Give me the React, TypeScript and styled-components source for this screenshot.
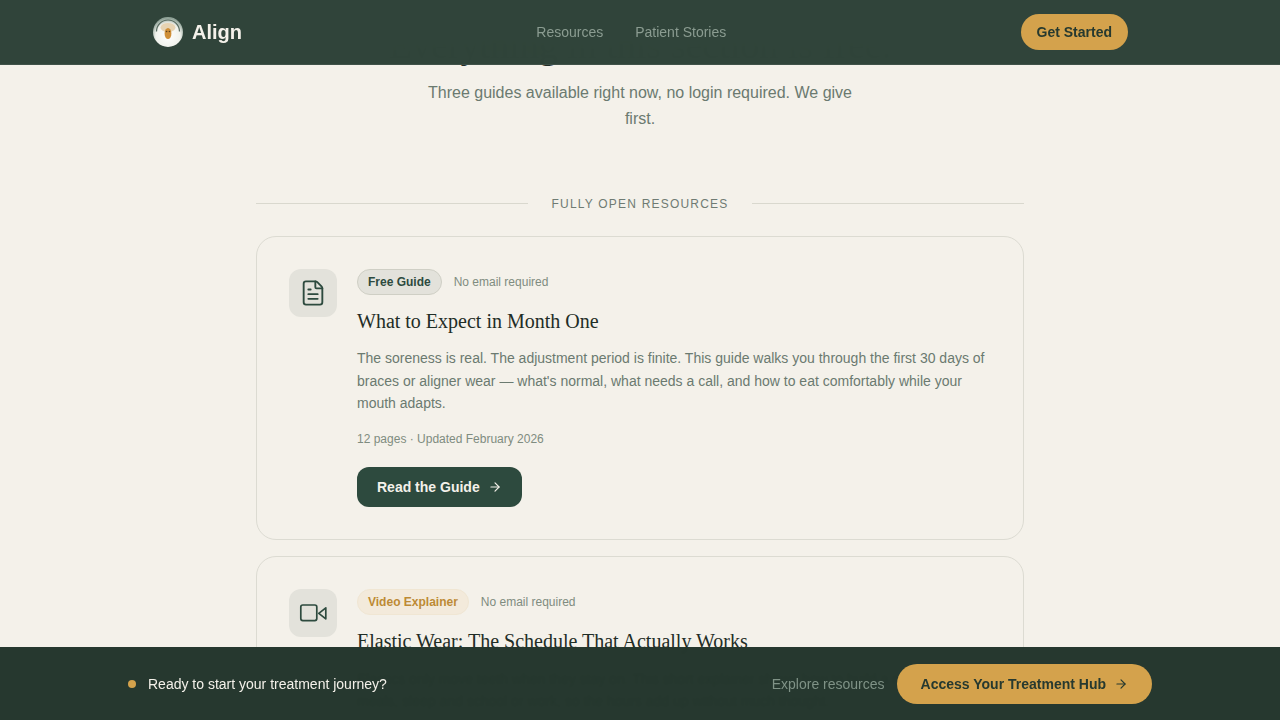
import React, { useLayoutEffect } from 'react';
import styled, { createGlobalStyle } from 'styled-components';
import { ArrowRight, FileText, Mic } from 'lucide-react';

const SANS = `'Liberation Sans', Arial, sans-serif`;
const SERIF = `'Liberation Serif', 'Times New Roman', serif`;

const GlobalStyle = createGlobalStyle`
  html, body {
    margin: 0;
    padding: 0;
    background: #f4f1ea;
    font-family: ${SANS};
    color: #1f2d26;
  }
  * { box-sizing: border-box; }
`;

const Header = styled.header`
  position: fixed;
  top: 0;
  left: 0;
  right: 0;
  height: 65px;
  z-index: 10;
  background: rgba(46, 66, 56, 0.99);
  backdrop-filter: blur(12px);
  border-bottom: 1px solid rgba(255, 255, 255, 0.08);
`;

const HeaderInner = styled.div`
  width: 976px;
  height: 64px;
  margin: 0 auto;
  display: flex;
  align-items: center;
  justify-content: space-between;
`;

const Brand = styled.a`
  display: flex;
  align-items: center;
  gap: 8px;
  font-size: 20px;
  font-weight: 700;
  color: #f4f1ea;
`;

const Nav = styled.nav`
  display: flex;
  gap: 32px;
`;

const NavLink = styled.a`
  font-size: 14px;
  color: #8b9c91;
`;

const StartButton = styled.a`
  height: 36px;
  padding: 0 16px;
  display: flex;
  align-items: center;
  border-radius: 18px;
  background: #d4a24c;
  color: #26392f;
  font-size: 14px;
  font-weight: 700;
`;

const Main = styled.main`
  width: 768px;
  margin: 0 auto;
  padding: 113px 0 120px;
`;

const Hero = styled.section`
  text-align: center;
  margin-bottom: 62px;
`;

const HeroTitle = styled.h1`
  margin: 0 0 11px;
  font-family: ${SERIF};
  font-size: 38px;
  line-height: 48px;
  font-weight: 400;
  color: #1f2d26;
`;

const HeroText = styled.p`
  width: 448px;
  margin: 0 auto;
  font-size: 16px;
  line-height: 26px;
  color: #6b7a70;
`;

const SectionLabel = styled.div`
  display: flex;
  align-items: center;
  gap: 24px;
  margin-bottom: 22px;
  font-size: 12px;
  line-height: 20px;
  letter-spacing: 1.2px;
  text-transform: uppercase;
  color: #6f7b73;

  &::before,
  &::after {
    content: '';
    flex: 1;
    height: 1px;
    margin-top: -1px;
    background: #d9d8ce;
  }
`;

const CardList = styled.div`
  display: flex;
  flex-direction: column;
  gap: 16px;
`;

const Card = styled.article`
  display: flex;
  gap: 20px;
  padding: 32px;
  border: 1px solid #dcdbd2;
  border-radius: 20px;
`;

const IconBox = styled.div`
  flex: none;
  width: 48px;
  height: 48px;
  border-radius: 12px;
  background: #e3e2db;
  color: #2d4a3e;
  display: flex;
  align-items: center;
  justify-content: center;
`;

const CardBody = styled.div`
  flex: 1;
`;

const TagRow = styled.div`
  display: flex;
  align-items: center;
  gap: 12px;
  margin-bottom: 12px;
`;

const Tag = styled.span<{ $gold?: boolean }>`
  height: 26px;
  padding: 0 10px;
  display: flex;
  align-items: center;
  border-radius: 13px;
  font-size: 12px;
  font-weight: 700;
  border: 1px solid ${props => (props.$gold ? '#f0e6d3' : '#cfcfc5')};
  background: ${props => (props.$gold ? '#f3eadb' : '#e3e2db')};
  color: ${props => (props.$gold ? '#bd8a35' : '#2d4a3e')};
`;

const TagNote = styled.span`
  font-size: 12px;
  color: #7f8c80;
`;

const CardTitle = styled.h2`
  margin: 0 0 12.3px;
  font-family: ${SERIF};
  font-size: 20px;
  line-height: 28px;
  font-weight: 400;
  color: #1f2d26;
`;

const CardText = styled.p`
  margin: 0 0 15.7px;
  font-size: 14px;
  line-height: 22.4px;
  color: #6b7a70;
`;

const CardMeta = styled.div`
  margin-bottom: 19px;
  font-size: 12px;
  line-height: 18px;
  color: #7f8c80;
`;

const ReadButton = styled.a`
  display: inline-flex;
  align-items: center;
  gap: 8px;
  height: 40px;
  padding: 0 20px;
  border-radius: 12px;
  background: #2d4a3e;
  color: #f4f1ea;
  font-size: 14px;
  font-weight: 700;
`;

const BottomBar = styled.div`
  position: fixed;
  left: 0;
  right: 0;
  bottom: 0;
  height: 73px;
  z-index: 10;
  background: rgba(34, 52, 43, 0.98);
  backdrop-filter: blur(1px);
`;

const BottomInner = styled.div`
  width: 1024px;
  height: 100%;
  margin: 0 auto;
  display: flex;
  align-items: center;
  justify-content: space-between;
`;

const Prompt = styled.div`
  display: flex;
  align-items: center;
  gap: 12px;
  font-size: 14px;
  color: #f4f1ea;
`;

const Dot = styled.span`
  width: 8px;
  height: 8px;
  border-radius: 50%;
  background: #d4a24c;
`;

const BottomActions = styled.div`
  display: flex;
  align-items: center;
  gap: 12px;
`;

const ExploreLink = styled.a`
  font-size: 14px;
  color: #7f9286;
`;

const HubButton = styled.a`
  height: 40px;
  padding: 0 24px;
  display: flex;
  align-items: center;
  gap: 8px;
  border-radius: 20px;
  background: #d4a24c;
  color: #26392f;
  font-size: 14px;
  font-weight: 700;
`;

const Logo = () => (
  <svg width="32" height="32" viewBox="0 0 32 32" aria-hidden="true">
    <defs>
      <radialGradient id="logoHalo" cx="50%" cy="62%" r="58%">
        <stop offset="0%" stopColor="#ffffff" />
        <stop offset="70%" stopColor="#f1f2ec" />
        <stop offset="100%" stopColor="#8fa297" />
      </radialGradient>
      <filter id="logoSoft">
        <feGaussianBlur stdDeviation="0.35" />
      </filter>
    </defs>
    <g filter="url(#logoSoft)">
      <circle cx="16" cy="16" r="15" fill="url(#logoHalo)" />
      <path d="M4.5 15.5a11.5 11.5 0 0 1 23 0" fill="none" stroke="#55695e" strokeWidth="1.2" />
      <ellipse cx="16" cy="11.5" rx="7.5" ry="4.5" fill="#e6d3b3" />
      <ellipse cx="16" cy="17.5" rx="3.4" ry="5.5" fill="#cf8f38" />
      <circle cx="14.6" cy="15.5" r="0.8" fill="#5a4020" />
      <circle cx="17.4" cy="15.5" r="0.8" fill="#5a4020" />
    </g>
  </svg>
);

const VideoIcon = () => (
  <svg
    width="28"
    height="28"
    viewBox="0 0 28 28"
    fill="none"
    stroke="currentColor"
    strokeWidth="1.7"
    strokeLinejoin="round"
    aria-hidden="true"
  >
    <rect x="1.8" y="6" width="16" height="15.6" rx="2" />
    <path d="M19.8 14.3 26.8 8.8v11z" />
  </svg>
);

const App: React.FC = () => {
  useLayoutEffect(() => {
    window.scrollTo(0, 92);
  }, []);

  return (
    <>
      <GlobalStyle />
      <Header>
        <HeaderInner>
          <Brand>
            <Logo />
            Align
          </Brand>
          <Nav>
            <NavLink>Resources</NavLink>
            <NavLink>Patient Stories</NavLink>
          </Nav>
          <StartButton>Get Started</StartButton>
        </HeaderInner>
      </Header>

      <Main>
        <Hero>
          <HeroTitle>Everything in this section is free.</HeroTitle>
          <HeroText>
            Three guides available right now, no login required. We give first.
          </HeroText>
        </Hero>

        <SectionLabel>Fully open resources</SectionLabel>

        <CardList>
          <Card>
            <IconBox>
              <FileText size={28} strokeWidth={1.6} />
            </IconBox>
            <CardBody>
              <TagRow>
                <Tag>Free Guide</Tag>
                <TagNote>No email required</TagNote>
              </TagRow>
              <CardTitle>What to Expect in Month One</CardTitle>
              <CardText>
                The soreness is real. The adjustment period is finite. This guide walks you through
                the first 30 days of braces or aligner wear — what's normal, what needs a call, and
                how to eat comfortably while your mouth adapts.
              </CardText>
              <CardMeta>12 pages · Updated February 2026</CardMeta>
              <ReadButton>
                Read the Guide
                <ArrowRight size={14} />
              </ReadButton>
            </CardBody>
          </Card>

          <Card>
            <IconBox>
              <VideoIcon />
            </IconBox>
            <CardBody>
              <TagRow>
                <Tag $gold>Video Explainer</Tag>
                <TagNote>No email required</TagNote>
              </TagRow>
              <CardTitle>Elastic Wear: The Schedule That Actually Works</CardTitle>
              <CardText>
                Elastics only move teeth when they stay on. This short explainer shows how to build
                a routine around meals, sleep and school or work, so the hours add up without much
                thought.
              </CardText>
              <CardMeta>8 minutes · Updated January 2026</CardMeta>
              <ReadButton>
                Watch the Video
                <ArrowRight size={14} />
              </ReadButton>
            </CardBody>
          </Card>

          <Card>
            <IconBox>
              <Mic size={28} strokeWidth={1.6} />
            </IconBox>
            <CardBody>
              <TagRow>
                <Tag>Free Guide</Tag>
                <TagNote>No email required</TagNote>
              </TagRow>
              <CardTitle>Questions to Ask at Your Consultation</CardTitle>
              <CardText>
                A short checklist to bring along to your first visit, covering cost, timing and
                what happens if the plan needs to change partway through.
              </CardText>
              <CardMeta>4 pages · Updated January 2026</CardMeta>
              <ReadButton>
                Read the Guide
                <ArrowRight size={14} />
              </ReadButton>
            </CardBody>
          </Card>
        </CardList>
      </Main>

      <BottomBar>
        <BottomInner>
          <Prompt>
            <Dot />
            Ready to start your treatment journey?
          </Prompt>
          <BottomActions>
            <ExploreLink>Explore resources</ExploreLink>
            <HubButton>
              Access Your Treatment Hub
              <ArrowRight size={14} />
            </HubButton>
          </BottomActions>
        </BottomInner>
      </BottomBar>
    </>
  );
};

export default App;
